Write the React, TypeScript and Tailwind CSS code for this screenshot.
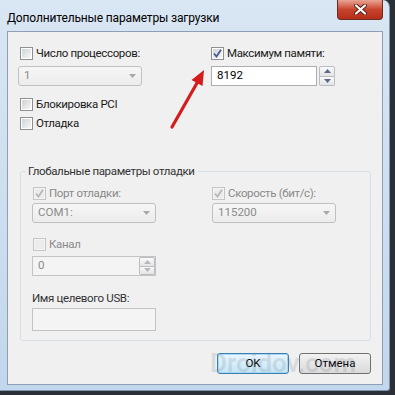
import React from "react";

const FONT = { fontFamily: 'Roboto, "Noto Sans", sans-serif' };

function Check({ checked = false, disabled = false }: { checked?: boolean; disabled?: boolean }) {
  return (
    <span
      className={
        "w-[13px] h-[13px] shrink-0 border p-[1px] flex " +
        (disabled ? "border-[#c5c5c5] bg-[#f4f4f4]" : "border-[#8e8f8f] bg-white")
      }
    >
      <span
        className={
          "flex-1 flex items-center justify-center " +
          (disabled ? "bg-[#ececec]" : "bg-linear-to-br from-[#cfd3d8] to-[#f7f7f7]")
        }
      >
        {checked && (
          <svg width="9" height="9" viewBox="0 0 9 9">
            <path
              d="M1 4.5 L3.5 7.5 L8 0.8"
              fill="none"
              stroke={disabled ? "#b4b8bb" : "#4a5c8f"}
              strokeWidth="1.8"
            />
          </svg>
        )}
      </span>
    </span>
  );
}

function CheckRow({
  label,
  checked,
  disabled,
  className = "",
}: {
  label: string;
  checked?: boolean;
  disabled?: boolean;
  className?: string;
}) {
  return (
    <div className={"flex items-center gap-[3px] h-[15px] " + className}>
      <Check checked={checked} disabled={disabled} />
      <span
        className={
          "text-[11.5px] tracking-[-0.35px] leading-[15px] " + (disabled ? "text-[#8a8a8a]" : "text-[#1a1a1a]")
        }
      >
        {label}
      </span>
    </div>
  );
}

function Combo({ value, className = "" }: { value: string; className?: string }) {
  return (
    <div
      className={
        "h-[20px] w-[124px] rounded-[3px] border border-[#c0c0c0] bg-linear-to-b from-[#f6f6f6] to-[#ececec] flex items-center justify-between pl-[5px] pr-[5px] " +
        className
      }
    >
      <span className="text-[11.5px] leading-none text-[#8a8a8a]">{value}</span>
      <svg width="7" height="4" viewBox="0 0 7 4">
        <path d="M0 0 H7 L3.5 4 Z" fill="#a8a8a8" />
      </svg>
    </div>
  );
}

function SpinBtns({ disabled = false }: { disabled?: boolean }) {
  const c = disabled ? "#b8b8b8" : "#5a6a85";
  return (
    <div className="flex flex-col w-[16px] h-full gap-0">
      <div className="flex-1 border border-[#b8bcc4] rounded-t-[2px] bg-linear-to-b from-[#fafafa] to-[#e4e4e4] flex items-center justify-center">
        <svg width="7" height="4" viewBox="0 0 7 4">
          <path d="M0 4 H7 L3.5 0 Z" fill={c} />
        </svg>
      </div>
      <div className="flex-1 border border-t-0 border-[#b8bcc4] rounded-b-[2px] bg-linear-to-b from-[#fafafa] to-[#e4e4e4] flex items-center justify-center">
        <svg width="7" height="4" viewBox="0 0 7 4">
          <path d="M0 0 H7 L3.5 4 Z" fill={c} />
        </svg>
      </div>
    </div>
  );
}

export default function App() {
  return (
    <div className="relative w-[395px] h-[395px] overflow-hidden bg-[#2b3036]" style={FONT}>
      {/* window */}
      <div className="w-[390px] h-[391px] bg-linear-to-b from-[#d9e6f3] to-[#c2d7ec] rounded-tr-[7px] rounded-br-[3px] pl-[7px] pr-[6px] flex flex-col border-r border-b border-[#7f95ad]">
        {/* title bar */}
        <div className="h-[31px] flex justify-between items-start shrink-0">
          <div className="pt-[10px] text-[12px] tracking-[-0.15px] leading-[16px] text-black">
            Дополнительные параметры загрузки
          </div>
          <div className="w-[46px] h-[20px] rounded-b-[4px] border border-t-0 border-[#6b2a22] bg-linear-to-b from-[#e8a394] via-[#c8432c] to-[#b52d17] flex items-center justify-center">
            <svg width="13" height="11" viewBox="0 0 13 11">
              <path d="M2 1.5 L11 9.5 M11 1.5 L2 9.5" stroke="#5a2016" strokeWidth="4" strokeLinecap="round" />
              <path d="M2 1.5 L11 9.5 M11 1.5 L2 9.5" stroke="#ffffff" strokeWidth="2.2" strokeLinecap="round" />
            </svg>
          </div>
        </div>

        {/* content */}
        <div className="relative h-[354px] bg-[#f0f0f0] border border-[#8c9fb5]">
          <div className="grid grid-cols-[193px_1fr] pl-[10px]">
            <div className="flex flex-col">
              <CheckRow label="Число процессоров:" className="mt-[14px] ml-[2px]" />
              <Combo value="1" className="mt-[5px]" />
              <CheckRow label="Блокировка PCI" className="mt-[11px] ml-[2px]" />
              <CheckRow label="Отладка" className="mt-[4px] ml-[2px]" />
            </div>
            <div className="flex flex-col">
              <CheckRow label="Максимум памяти:" checked className="mt-[14px]" />
              <div className="mt-[5px] flex gap-[2px] h-[20px]">
                <div className="w-[106px] h-full border border-[#abadb3] bg-white flex items-center pl-[5px]">
                  <span className="text-[11.5px] leading-none text-black">8192</span>
                </div>
                <SpinBtns />
              </div>
            </div>
          </div>

          {/* group box */}
          <div className="relative ml-[12px] mt-[40px] w-[351px] h-[170px] border border-[#d5dfe5] rounded-[3px] pl-[11px]">
            <span className="absolute -top-[9px] left-[5px] px-[2px] bg-[#f0f0f0] text-[11.5px] tracking-[-0.35px] leading-[16px] text-[#333333]">
              Глобальные параметры отладки
            </span>
            <div className="grid grid-cols-[180px_1fr]">
              <div className="flex flex-col">
                <CheckRow label="Порт отладки:" checked disabled className="mt-[14px] ml-[1px]" />
                <Combo value="COM1:" className="mt-[2px]" />
                <CheckRow label="Канал" disabled className="mt-[14px] ml-[1px]" />
                <div className="mt-[4px] w-[124px] h-[20px] border border-[#c3c3c3] bg-[#f4f4f4] flex">
                  <div className="flex-1 flex items-center pl-[5px]">
                    <span className="text-[11.5px] leading-none text-[#8a8a8a]">0</span>
                  </div>
                  <SpinBtns disabled />
                </div>
                <div className="mt-[14px] text-[11.5px] tracking-[-0.35px] leading-[16px] text-[#333333]">
                  Имя целевого USB:
                </div>
                <div className="mt-[2px] w-[124px] h-[23px] border border-[#c3c3c3] bg-[#f4f4f4]" />
              </div>
              <div className="flex flex-col">
                <CheckRow label="Скорость (бит/с):" checked disabled className="mt-[14px]" />
                <Combo value="115200" className="mt-[2px]" />
              </div>
            </div>
          </div>

          {/* buttons */}
          <div className="mt-[12px] flex justify-end gap-[10px] pr-[11px]">
            <div className="w-[72px] h-[21px] rounded-[3px] border border-[#3c7fb1] shadow-[0_0_0_1px_#a9d6f5_inset] bg-linear-to-b from-[#eaf6fd] to-[#c4e5f6] flex items-center justify-center text-[11.5px] text-black">
              OK
            </div>
            <div className="w-[72px] h-[21px] rounded-[3px] border border-[#707070] bg-linear-to-b from-[#f2f2f2] to-[#dadada] flex items-center justify-center text-[11.5px] text-black">
              Отмена
            </div>
          </div>

          {/* watermark */}
          <div className="absolute left-[202px] top-[318px] text-[26px] leading-none font-semibold text-[rgba(110,125,140,0.2)] pointer-events-none">
            Droidov.com
          </div>
        </div>
      </div>

      {/* red arrow */}
      <svg className="absolute left-0 top-0 pointer-events-none" width="395" height="395" viewBox="0 0 395 395">
        <line x1="172" y1="127" x2="197" y2="83" stroke="#d41c1c" strokeWidth="3.2" strokeLinecap="round" />
        <polygon points="204,70 202.5,86 191.5,80" fill="#d41c1c" />
      </svg>
    </div>
  );
}
